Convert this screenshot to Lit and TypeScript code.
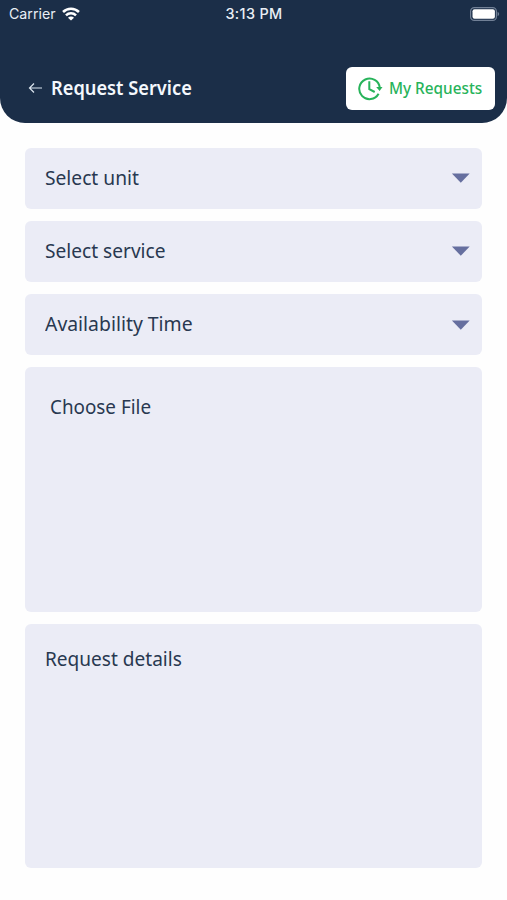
import { LitElement, html, css } from "lit";
import { customElement, property } from "lit/decorators.js";
import { styleMap } from "lit/directives/style-map.js";

@customElement("status-bar")
class StatusBar extends LitElement {
  static styles = css`
    :host {
      display: grid;
      grid-template-columns: 1fr auto 1fr;
      align-items: center;
      height: 27px;
      padding: 0 7px 0 9px;
      color: #e9eef5;
      font: 14.2px/27px Inter, "Liberation Sans", sans-serif;
    }
    .carrier { display: flex; align-items: center; gap: 6px; height: 26px; }
    .time { font-weight: 500; font-size: 14.4px; letter-spacing: 0.35px; margin-right: 1px; }
    .battery { justify-self: end; }
    svg { display: block; }
  `;
  render() {
    return html`
      <div class="carrier">
        <span>Carrier</span>
        <svg width="18" height="14" viewBox="0 0 19 14" fill="none" stroke="#fff" stroke-width="2.7">
          <path d="M1.1 4.9a12 12 0 0 1 16.8 0" />
          <path d="M4.2 8.4a7.6 7.6 0 0 1 10.6 0" />
          <path d="M9.5 13.9 6.3 10.9a4.5 4.5 0 0 1 6.4 0z" fill="#fff" stroke="none" />
        </svg>
      </div>
      <span class="time">3:13 PM</span>
      <svg class="battery" width="30" height="14" viewBox="0 0 30 14">
        <rect x=".6" y=".6" width="25.8" height="12.8" rx="3.7" fill="none" stroke="#718096" stroke-width="1.2" />
        <rect x="2.5" y="2.2" width="22.4" height="9.6" rx="2" fill="#fff" />
        <path d="M27.6 4.8v4.4q1.6-.8 1.6-2.2t-1.6-2.2z" fill="#718096" />
      </svg>
    `;
  }
}

@customElement("form-field")
class FormField extends LitElement {
  @property() label = "";
  @property() kind = "select";
  @property({ type: Number }) stretch = 0.95;
  static styles = css`
    :host { display: block; }
    .box {
      display: flex;
      justify-content: space-between;
      box-sizing: border-box;
      padding: 0 12px 0 19.7px;
      background: #ebecf6;
      border-radius: 6px;
      color: #283850;
      font: 20px/57px "Noto Sans", sans-serif;
    }
    .select { height: 61px; align-items: center; }
    .file { height: 244.5px; padding: 11px 12px 0 24.7px; }
    .details { height: 243.5px; padding-top: 6px; }
    .label { display: block; height: 59px; transform-origin: left; white-space: nowrap; }
    svg { display: block; }
  `;
  render() {
    return html`
      <div class="box ${this.kind}">
        <span class="label" style=${styleMap({ transform: `scaleX(${this.stretch})` })}>${this.label}</span>
        ${this.kind === "select"
          ? html`<svg width="19" height="10" viewBox="0 0 19 10"><path d="M.9 .4h17.8L9.8 9.8z" fill="#666f9f" /></svg>`
          : null}
      </div>
    `;
  }
}

@customElement("app-root")
class AppRoot extends LitElement {
  static styles = css`
    :host { display: block; height: 900px; background: #fefefe; overflow: hidden; }
    .top { height: 123px; background: #1b2e48; border-radius: 0 0 25px 25px; }
    .bar {
      display: flex;
      align-items: center;
      justify-content: space-between;
      height: 43px;
      padding: 40px 12px 0 28px;
      font-family: "Noto Sans", sans-serif;
    }
    .title { display: flex; align-items: center; gap: 8px; color: #f4f8fd; font-size: 19.5px; line-height: 43px; font-weight: 600; padding-bottom: 2px; }
    .title span { transform: scaleX(0.935); transform-origin: left; white-space: nowrap; width: 150px; }
    .requests {
      display: flex;
      align-items: center;
      box-sizing: border-box;
      width: 149px;
      height: 43px;
      padding: 0 0 0 12px;
      gap: 6px;
      border: 0;
      border-radius: 6px;
      background: #fff;
      color: #27b35a;
      font: 500 16.5px/41px "Noto Sans", sans-serif;
    }
    .requests span { transform: scaleX(0.928); transform-origin: left; white-space: nowrap; width: 100px; padding-bottom: 3px; }
    .requests svg { flex: none; }
    .fields { display: flex; flex-direction: column; gap: 12.3px; padding: 24.5px 25px 0 25.3px; }
  `;
  render() {
    return html`
      <header class="top">
        <status-bar></status-bar>
        <div class="bar">
          <div class="title">
            <svg width="15" height="12" viewBox="0 0 15 12" fill="none" stroke="#dce5ef" stroke-width="1.2">
              <path d="M14 6H1.5M6 1.5 1.5 6 6 10.5" />
            </svg>
            <span>Request Service</span>
          </div>
          <button class="requests">
            <svg width="25" height="24" viewBox="0 0 25 24" fill="none" stroke="#27b35a" stroke-width="2">
              <path d="M20.6 16.8A10.3 10.3 0 1 1 21.8 10.8" />
              <path d="M11.3 4.2v8l5.4 2.8" />
              <path d="M18.2 10.1h6.3l-2.9 4z" fill="#27b35a" stroke="none" />
            </svg>
            <span>My Requests</span>
          </button>
        </div>
      </header>
      <main class="fields">
        <form-field label="Select unit" stretch="0.96"></form-field>
        <form-field label="Select service" stretch="0.956"></form-field>
        <form-field label="Availability Time" stretch="0.969"></form-field>
        <form-field label="Choose File" kind="file" stretch="0.942"></form-field>
        <form-field label="Request details" kind="details" stretch="0.953"></form-field>
      </main>
    `;
  }
}
